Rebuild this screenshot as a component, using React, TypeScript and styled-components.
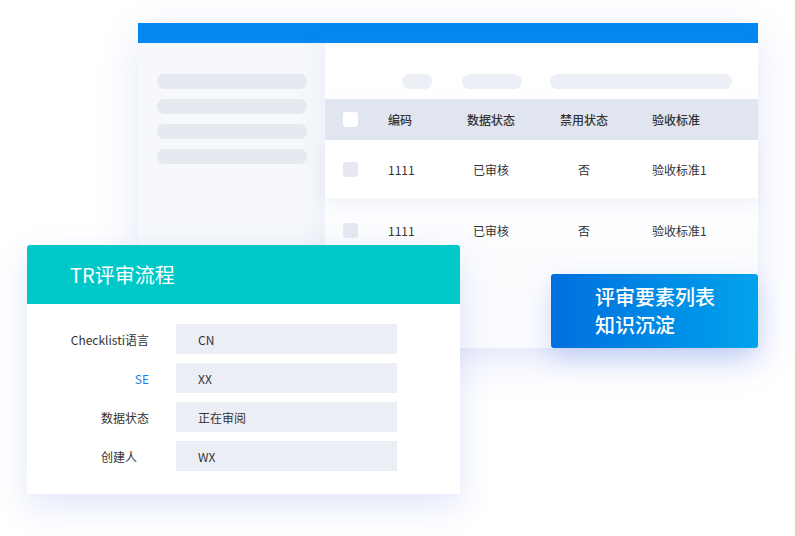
import styled, { createGlobalStyle } from "styled-components";

const GlobalStyle = createGlobalStyle`
  html, body {
    margin: 0;
    padding: 0;
    background: #ffffff;
  }
  body {
    font-family: "Noto Sans CJK SC", "Noto Sans", sans-serif;
    color: #333;
  }
`;

const Stage = styled.div`
  position: relative;
  width: 795px;
  height: 536px;
  overflow: hidden;
  padding: 23px 0 0 138px;
  box-sizing: border-box;
`;

const Window = styled.div`
  width: 620px;
  box-shadow: 0 12px 40px rgba(70, 100, 230, 0.14);
`;

const TopBar = styled.div`
  height: 20px;
  background: #0587f1;
`;

const WindowBody = styled.div`
  display: grid;
  grid-template-columns: 187px 1fr;
  height: 305px;
`;

const Sidebar = styled.div`
  background: #f6f8fb;
  padding: 31px 0 0 19px;
  display: flex;
  flex-direction: column;
  gap: 10px;
`;

const Pill = styled.div<{ $w: number }>`
  width: ${(p) => p.$w}px;
  height: 15px;
  border-radius: 8px;
  background: ${(p) => (p.$w > 120 && p.$w < 160 ? "#e6e9f0" : "#eceff5")};
`;

const Main = styled.div`
  background: linear-gradient(#ffffff, #fafbfe);
  padding-top: 31px;
  box-shadow: -10px 0 20px rgba(120, 140, 200, 0.06);
`;

const PillRow = styled.div`
  display: flex;
  padding-left: 77px;
  gap: 30px;
  margin-bottom: 10px;
  & > :last-child {
    margin-left: -2px;
  }
`;

const Row = styled.div<{ $kind: "head" | "first" | "plain" }>`
  display: grid;
  grid-template-columns: 45px 64px 78px 108px 1fr;
  align-items: center;
  padding-left: 18px;
  height: ${(p) => (p.$kind === "head" ? 41 : p.$kind === "first" ? 58 : 64)}px;
  font-size: 12px;
  font-weight: ${(p) => (p.$kind === "head" ? 500 : 400)};
  background: ${(p) =>
    p.$kind === "head" ? "#e1e5ef" : p.$kind === "first" ? "#ffffff" : "transparent"};
  box-shadow: ${(p) =>
    p.$kind === "first" ? "0 6px 12px rgba(90, 110, 180, 0.07)" : "none"};
  position: relative;
`;

const Check = styled.div<{ $head?: boolean }>`
  width: 15px;
  height: 15px;
  border-radius: 3px;
  background: ${(p) => (p.$head ? "#ffffff" : "#e6e9f1")};
`;

const Cell = styled.div<{ $center?: boolean; $pad?: number }>`
  text-align: ${(p) => (p.$center ? "center" : "left")};
  padding-left: ${(p) => p.$pad ?? 0}px;
  color: #333;
  white-space: nowrap;
`;

const FrontCard = styled.div`
  position: absolute;
  left: 27px;
  top: 245px;
  width: 433px;
  height: 249px;
  background: #ffffff;
  border-radius: 3px;
  box-shadow: 0 12px 34px rgba(70, 100, 220, 0.16);
  overflow: hidden;
`;

const CardHeader = styled.div`
  height: 59px;
  background: #00c8c8;
  color: #ffffff;
  font-size: 20px;
  font-weight: 400;
  display: flex;
  align-items: center;
  padding-left: 43px;
`;

const Form = styled.div`
  padding-top: 20px;
  display: flex;
  flex-direction: column;
  gap: 9px;
`;

const FormRow = styled.div`
  display: grid;
  grid-template-columns: 122px 221px;
  column-gap: 27px;
  align-items: center;
  font-size: 12px;
`;

const Label = styled.div<{ $accent?: boolean; $indent?: number }>`
  text-align: right;
  padding-right: ${(p) => p.$indent ?? 0}px;
  color: ${(p) => (p.$accent ? "#1a7fe0" : "#333")};
`;

const Value = styled.div`
  height: 30px;
  background: #eceef6;
  display: flex;
  align-items: center;
  padding-left: 22px;
  color: #333;
`;

const Badge = styled.div`
  position: absolute;
  left: 551px;
  top: 274px;
  width: 207px;
  height: 74px;
  border-radius: 3px;
  background: linear-gradient(90deg, #006fdf, #00a3ec);
  box-shadow: 0 10px 26px rgba(40, 90, 220, 0.2);
  color: #ffffff;
  font-size: 20px;
  font-weight: 500;
  line-height: 28px;
  display: flex;
  flex-direction: column;
  justify-content: center;
  padding-left: 44px;
  box-sizing: border-box;
`;

const rows = [
  { code: "1111", state: "已审核", disabled: "否", std: "验收标准1" },
  { code: "1111", state: "已审核", disabled: "否", std: "验收标准1" },
];

const fields = [
  { label: "Checklisti语言", value: "CN" },
  { label: "SE", value: "XX", accent: true },
  { label: "数据状态", value: "正在审阅" },
  { label: "创建人", value: "WX", indent: 12 },
];

function App() {
  return (
    <>
      <GlobalStyle />
      <Stage>
        <Window>
          <TopBar />
          <WindowBody>
            <Sidebar>
              {[0, 1, 2, 3].map((i) => (
                <Pill key={i} $w={150} />
              ))}
            </Sidebar>
            <Main>
              <PillRow>
                <Pill $w={30} />
                <Pill $w={60} />
                <Pill $w={182} />
              </PillRow>
              <Row $kind="head">
                <Check $head />
                <Cell>编码</Cell>
                <Cell $center>数据状态</Cell>
                <Cell $center>禁用状态</Cell>
                <Cell $pad={14}>验收标准</Cell>
              </Row>
              {rows.map((r, i) => (
                <Row key={i} $kind={i === 0 ? "first" : "plain"}>
                  <Check />
                  <Cell>{r.code}</Cell>
                  <Cell $center>{r.state}</Cell>
                  <Cell $center>{r.disabled}</Cell>
                  <Cell $pad={14}>{r.std}</Cell>
                </Row>
              ))}
            </Main>
          </WindowBody>
        </Window>
        <FrontCard>
          <CardHeader>TR评审流程</CardHeader>
          <Form>
            {fields.map((f) => (
              <FormRow key={f.label}>
                <Label $accent={f.accent} $indent={f.indent}>
                  {f.label}
                </Label>
                <Value>{f.value}</Value>
              </FormRow>
            ))}
          </Form>
        </FrontCard>
        <Badge>
          <span>评审要素列表</span>
          <span>知识沉淀</span>
        </Badge>
      </Stage>
    </>
  );
}

export default App;
